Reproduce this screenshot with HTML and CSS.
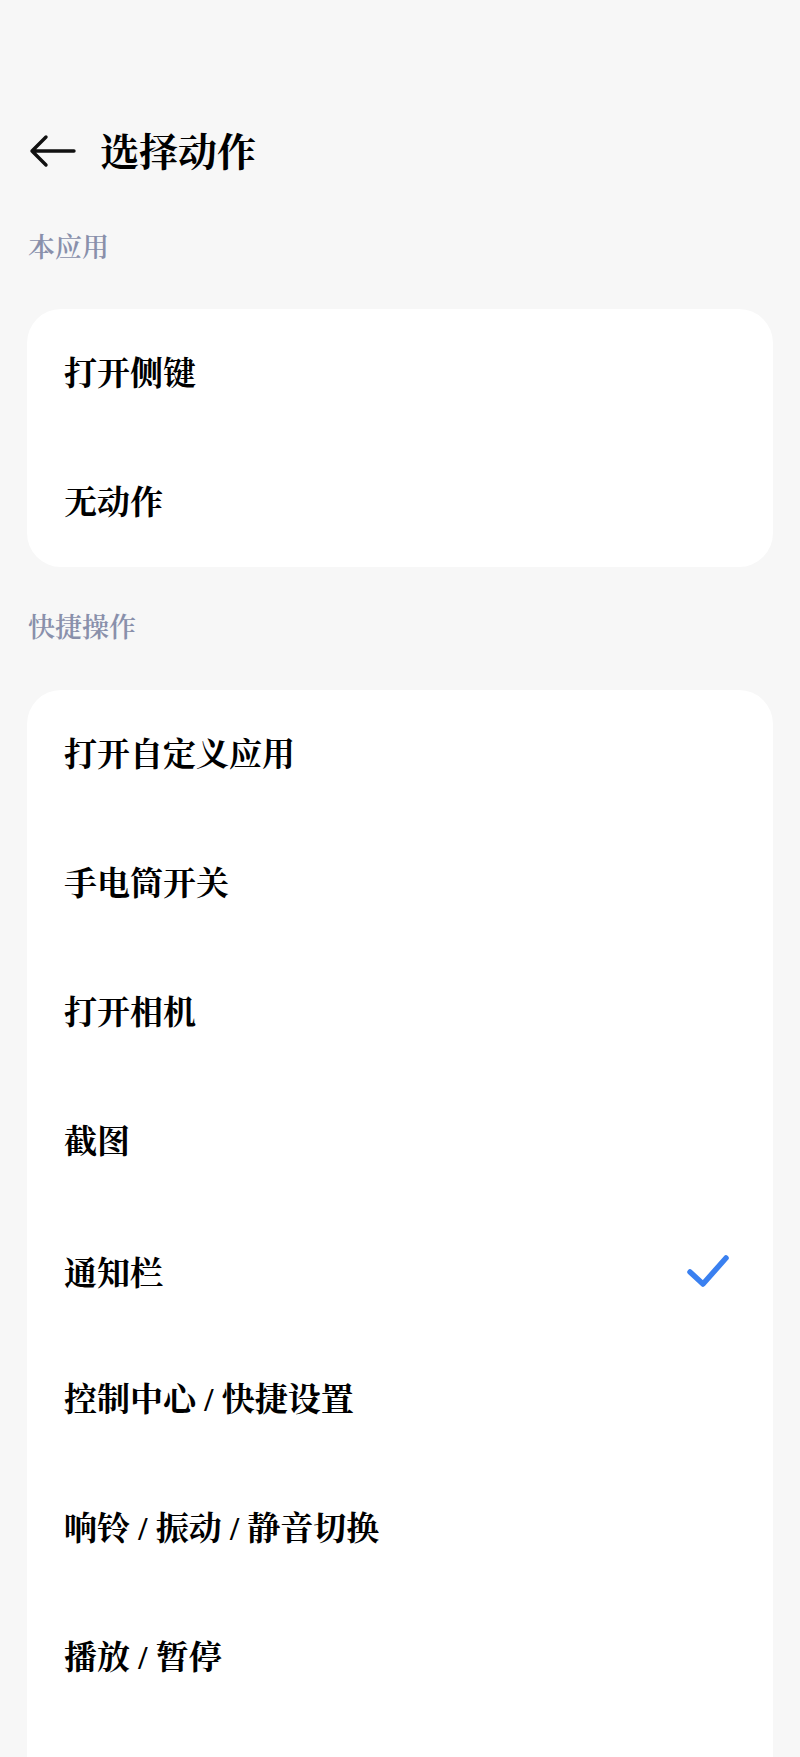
FILE: index.html
```html
<!DOCTYPE html>
<html lang="zh-CN">
<head>
<meta charset="utf-8">
<title>选择动作</title>
<link rel="stylesheet" href="styles.css">
</head>
<body>
<div class="screen">
  <header class="topbar">
    <span class="back" aria-label="返回">
      <svg width="48" height="40" viewBox="0 0 48 40">
        <path d="M46 20H4M18 6L4 20l14 14" fill="none" stroke="#111" stroke-width="3.4" stroke-linecap="round" stroke-linejoin="round"/>
      </svg>
    </span>
    <h1 class="title">选择动作</h1>
  </header>

  <div class="group-label">本应用</div>
  <ul class="card">
    <li class="row">打开侧键</li>
    <li class="row">无动作</li>
  </ul>

  <div class="group-label group-next">快捷操作</div>
  <ul class="card card-last">
    <li class="row">打开自定义应用</li>
    <li class="row">手电筒开关</li>
    <li class="row">打开相机</li>
    <li class="row">截图</li>
    <li class="row selected">通知栏
      <svg class="check" width="48" height="48" viewBox="0 0 48 48">
        <path d="M6 25l13 12L42 11" fill="none" stroke="#3a80f0" stroke-width="5.5" stroke-linecap="round" stroke-linejoin="round"/>
      </svg>
    </li>
    <li class="row">控制中心 / 快捷设置</li>
    <li class="row">响铃 / 振动 / 静音切换</li>
    <li class="row">播放 / 暂停</li>
  </ul>
</div>
</body>
</html>
```

FILE: styles.css
```css
html, body {
  margin: 0;
  padding: 0;
  background: #f7f7f7;
}

body {
  height: 100vh;
  overflow: hidden;
  font-family: "Liberation Serif", "Noto Serif CJK SC", "Source Han Serif SC", "AR PL UMing CN", "Noto Sans CJK SC", serif;
  color: #000;
}

.screen {
  display: flex;
  flex-direction: column;
}

.topbar {
  display: flex;
  align-items: center;
  height: 62px;
  padding: 120px 0 0 28px;
}

.back {
  display: flex;
  width: 48px;
  height: 40px;
}

.title {
  margin: 0 0 0 24px;
  padding-top: 4px;
  font-size: 39px;
  font-weight: 700;
  line-height: 58px;
}

.group-label {
  margin: 46px 0 0 28px;
  font-size: 27px;
  font-weight: 600;
  line-height: 40px;
  color: #8990ab;
}

.group-next {
  margin-top: 41px;
}

.card {
  list-style: none;
  margin: 41px 27px 0;
  padding: 0;
  background: #fff;
  border-radius: 34px;
}

/* the second list runs on below the fold */
.card-last {
  margin-top: 42px;
  padding-bottom: 120px;
}

.row {
  display: flex;
  align-items: center;
  justify-content: space-between;
  box-sizing: border-box;
  height: 129px;
  padding: 0 41px 6px 37px;
  font-size: 33px;
  font-weight: 700;
}

.selected {
  padding-bottom: 0;
}

.check {
  flex: none;
}
```
